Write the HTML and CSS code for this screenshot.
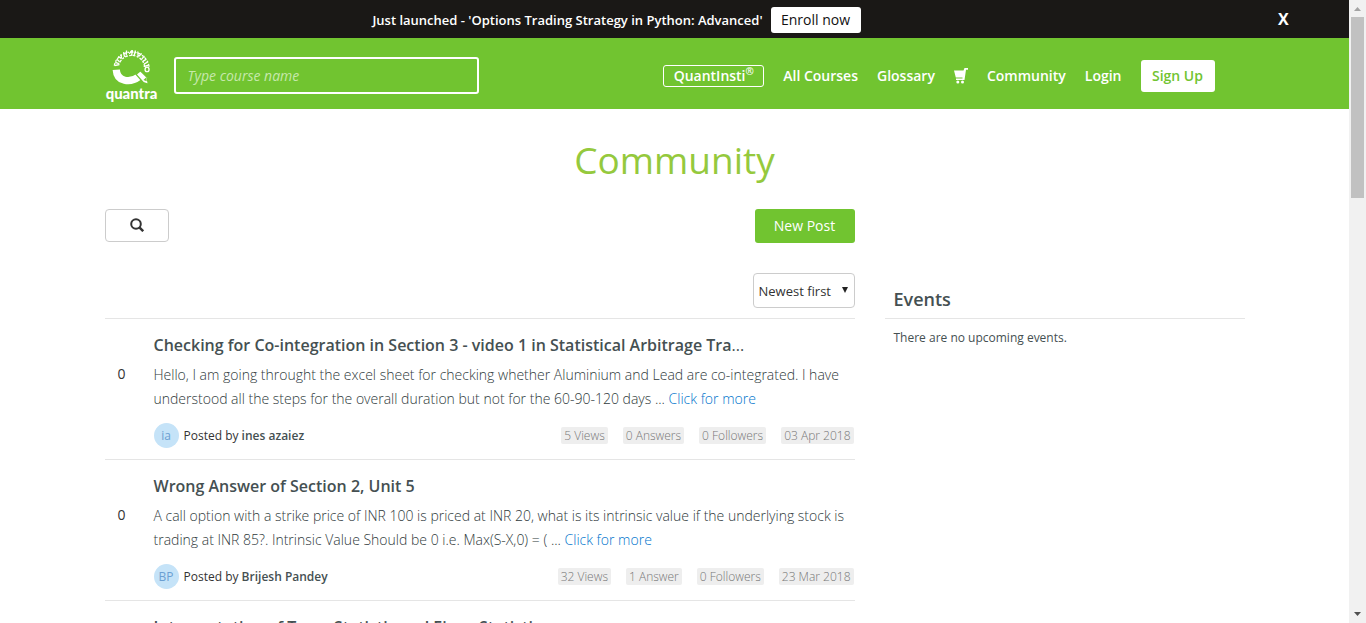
FILE: index.html
```html
<!DOCTYPE html>
<html lang="en">
<head>
<meta charset="utf-8">
<title>Community - Quantra</title>
<link rel="stylesheet" href="styles.css">
</head>
<body>
<div class="viewport">
<div class="page">
  <div class="banner">
    <p class="banner-message"><strong>Just launched - 'Options Trading Strategy in Python: Advanced'</strong> <button class="enroll" type="button">Enroll now</button></p>
    <button class="banner-close" type="button">X</button>
  </div>
  <header class="header">
    <div class="container header-inner">
      <a class="logo" href="#" aria-label="quantra">
        <svg viewBox="21 18 160 162" width="53" height="54">
          <g fill="none" stroke="#fff">
            <path d="M55 80C57 117 97 121 124 101" stroke-width="22"/>
            <path d="M49 68A53 50 0 0 1 154 72" stroke-width="4" stroke-dasharray="9 4 5 5"/>
            <path d="M62 67A40 39 0 0 1 141 75" stroke-width="4" stroke-dasharray="6 4 9 4"/>
            <path d="M50 68l11-3M52 58l11 4M56 48l9 8M61 40l10 7M69 34l2 12M77 27l3 14M86 22l-1 15M94 32l8-10M104 21l-3 17M113 22l-4 15M121 39l-1-14M122 40l10-9M132 48l8-10M135 55l10-6M139 63l12-7M138 71l14-5" stroke-width="4"/>
            <ellipse cx="148" cy="79" rx="6" ry="7" stroke-width="4"/>
            <path d="M115 94l13-11 20 20 4 21-15-5z" stroke="#71c430" stroke-width="4" fill="#fff"/>
            <path d="M137 111l9-8 1 12z" fill="#71c430" stroke="none"/>
          </g>
          <text class="logo-text" x="101" y="169" text-anchor="middle">quantra</text>
        </svg>
      </a>
      <input class="course-search" type="text" placeholder="Type course name" aria-label="Course name">
      <nav class="nav">
        <a class="brand-link" href="#">QuantInsti<sup>®</sup></a>
        <a href="#">All Courses</a>
        <a href="#">Glossary</a>
        <a class="cart" href="#" aria-label="Cart"><svg viewBox="0 0 14 16" width="14" height="16"><path d="M0 2.500h9.500L10.500 0H14v1.800h-2L10.500 12H2v-1.500h6.500V9.500H1.800z" fill="#fff"/><circle cx="3.800" cy="14" r="1.500" fill="#fff"/><circle cx="8.500" cy="14" r="1.500" fill="#fff"/></svg></a>
        <a href="#">Community</a>
        <a href="#">Login</a>
        <a class="signup" href="#">Sign Up</a>
      </nav>
    </div>
  </header>
  <main class="container">
    <h1 class="page-title">Community</h1>
    <div class="columns">
      <section class="feed">
        <div class="toolbar">
          <button class="search-button" type="button" aria-label="Search"><svg viewBox="0 0 14 14" width="14" height="14" fill="none" stroke="#333" stroke-width="2"><circle cx="6" cy="6" r="4.800"/><path d="M9.400 9.400L13.200 13.200" stroke-width="2.500"/></svg></button>
          <button class="new-post" type="button">New Post</button>
        </div>
        <div class="sorting">
          <div class="select-wrap">
            <select class="sort" aria-label="Sort posts"><option>Newest first</option><option>Oldest first</option></select>
            <svg class="select-arrow" viewBox="0 0 6 6" width="6" height="6"><path d="M0 0h6L3 6z" fill="#222"/></svg>
          </div>
        </div>
        <article class="post">
          <div class="votes">0</div>
          <div class="post-body">
            <h2 class="post-title">Checking for Co-integration in Section 3 - video 1 in Statistical Arbitrage Tra<span class="more">...</span></h2>
            <p class="excerpt">Hello, I am going throught the excel sheet for checking whether Aluminium and Lead are co-integrated. I have<br>understood all the steps for the overall duration but not for the 60-90-120 days ... <a href="#">Click for more</a></p>
            <div class="meta">
              <span class="avatar">ia</span><span class="author">Posted by <strong>ines azaiez</strong></span>
              <ul class="stats"><li>5 Views</li><li>0 Answers</li><li>0 Followers</li><li>03 Apr 2018</li></ul>
            </div>
          </div>
        </article>
        <article class="post">
          <div class="votes">0</div>
          <div class="post-body">
            <h2 class="post-title">Wrong Answer of Section 2, Unit 5</h2>
            <p class="excerpt">A call option with a strike price of INR 100 is priced at INR 20, what is its intrinsic value if the underlying stock is<br>trading at INR 85?. Intrinsic Value Should be 0 i.e. Max(S-X,0) = ( ... <a href="#">Click for more</a></p>
            <div class="meta">
              <span class="avatar">BP</span><span class="author">Posted by <strong>Brijesh Pandey</strong></span>
              <ul class="stats"><li>32 Views</li><li>1 Answer</li><li>0 Followers</li><li>23 Mar 2018</li></ul>
            </div>
          </div>
        </article>
        <article class="post">
          <div class="votes"></div>
          <div class="post-body">
            <h2 class="post-title">Interpretation of Trace Statistic and Eigen Statistic</h2>
          </div>
        </article>
      </section>
      <aside class="events">
        <h2 class="events-title">Events</h2>
        <p class="events-empty">There are no upcoming events.</p>
      </aside>
    </div>
  </main>
</div>
<div class="scrollbar" aria-hidden="true">
  <svg viewBox="0 0 7 4" width="7" height="4"><path d="M0 4L3.500 0L7 4z" fill="#a3a3a3"/></svg>
  <div class="thumb"></div>
  <svg class="scroll-down" viewBox="0 0 7 4" width="7" height="4"><path d="M0 0L3.500 4L7 0z" fill="#505050"/></svg>
</div>
</div>
</body>
</html>
```
FILE: styles.css
```css
* { box-sizing: border-box; }
body { margin: 0; font-family: "Open Sans", "Noto Sans", sans-serif; font-size: 14px; color: #455052; background: #fff; }
button, input, select { font-family: inherit; }
a { text-decoration: none; color: #0074cc; }
p, h1, h2, ul { margin: 0; padding: 0; }
.viewport { display: grid; grid-template-columns: minmax(0, 1fr) 17px; height: 100vh; overflow: hidden; }
.page { overflow: hidden; }
.container { max-width: 1170px; margin: 0 auto; padding: 0 15px; }

.banner { display: grid; grid-template-columns: 1fr 116px; align-items: center; height: 38px; background: #1a1816; color: #fff; }
.banner-message { display: flex; justify-content: center; align-items: center; gap: 8px; padding-top: 1px; font-size: 13px; }
.banner-message strong { font-weight: 600; }
.enroll { border: 0; border-radius: 3px; background: #fff; color: #111; width: 90px; height: 26px; padding: 0; font-size: 14px; }
.banner-close { justify-self: start; margin-left: 45px; border: 0; padding: 0; background: none; color: #fff; font-size: 16px; font-weight: 700; }

.header { background: #71c430; }
.header-inner { display: flex; align-items: center; height: 71px; }
.logo { display: block; width: 53px; height: 54px; margin-top: 5px; }
.logo svg { display: block; }
.logo-text { font-family: Lato, sans-serif; font-weight: 900; font-size: 45px; fill: #fff; }
.course-search { width: 305px; height: 37px; margin: 4px 0 0 16px; padding: 0 12px; border: 2px solid #fff; border-radius: 3px; background: transparent; color: #fff; font-size: 14px; outline: 0; }
.course-search::placeholder { color: #c6e8ac; font-style: italic; opacity: 1; }
.nav { display: flex; align-items: center; gap: 19px; margin: 4px 30px 0 auto; font-size: 14px; font-weight: 600; line-height: 20px; }
.nav a { color: #fff; white-space: nowrap; }
.nav sup { font-size: 10px; line-height: 0; }
.nav .brand-link { border: 1px solid #fff; border-radius: 3px; width: 101px; text-align: center; }
.nav .cart svg { display: block; }
.nav .signup { width: 74px; padding: 6px 0; border-radius: 3px; background: #fff; color: #71c430; text-align: center; }

.page-title { padding: 27px 0 25px; font-size: 37px; font-weight: 400; line-height: 48px; text-align: center; color: #95c93d; }
.columns { display: grid; grid-template-columns: minmax(0, 750fr) minmax(0, 360fr); gap: 30px; }
.toolbar { display: flex; justify-content: space-between; align-items: flex-start; height: 64px; }
.search-button { display: grid; place-items: center; width: 64px; height: 33px; padding: 0 0 2px; border: 1px solid #ccc; border-radius: 4px; background: #fff; }
.new-post { width: 100px; height: 34px; padding: 0 0 2px; border: 0; border-radius: 3px; background: #71c430; color: #fff; font-size: 14px; }
.sorting { display: flex; justify-content: flex-end; height: 45px; }
.select-wrap { position: relative; width: 102px; height: 35px; }
.sort { appearance: none; width: 100%; height: 100%; padding: 0 0 0 5px; border: 1px solid #ccc; border-radius: 4px; background: #fff; color: #333; font-size: 13px; }
.select-arrow { position: absolute; right: 7px; top: 14px; pointer-events: none; }

.post { display: grid; grid-template-columns: 49px minmax(0, 1fr); border-top: 1px solid #e5e5e5; padding: 14px 0 11px; }
.votes { width: 34px; padding-top: 31px; text-align: center; line-height: 20px; color: #333; }
.post-title { margin-bottom: 6px; font-size: 16px; font-weight: 600; line-height: 24px; white-space: nowrap; }
.more { font-weight: 400; }
.excerpt { font-size: 14px; line-height: 24px; font-weight: 300; color: #2f3a3c; white-space: nowrap; }
.meta { display: flex; align-items: center; margin-top: 12px; font-size: 12px; }
.avatar { display: grid; place-items: center; width: 25px; height: 25px; margin-right: 5px; border-radius: 50%; background: #c5e3f8; color: #6b9fd2; }
.author { color: #333; }
.author strong { font-weight: 600; color: #455052; }
.stats { display: flex; gap: 15px; margin: 0 1px 0 auto; list-style: none; font-weight: 300; color: #777; }
.stats li { padding: 0 3px; border-radius: 2px; background: #eee; line-height: 17px; }

.events { padding-top: 78px; }
.events-title { padding: 0 9px 6px; border-bottom: 1px solid #e5e5e5; font-size: 18px; font-weight: 600; line-height: 25px; }
.events-empty { padding: 9px 9px 0; font-size: 12px; line-height: 20px; }

.scrollbar { display: flex; flex-direction: column; align-items: center; padding: 7px 0; background: #f1f1f1; }
.thumb { width: 13px; height: 181px; margin-top: 6px; background: #c1c1c1; }
.scroll-down { margin-top: auto; }
```
